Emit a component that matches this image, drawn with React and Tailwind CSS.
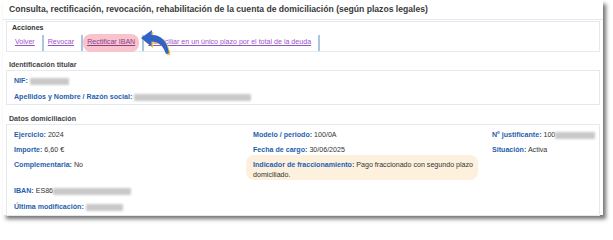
import React from "react";

const Blur = ({ w }) => (
    <span
        className="inline-block align-middle h-[7px] bg-[#c9c9c9] blur-[1.2px] rounded-[1px]"
        style={{ width: w }}
    />
);

const Field = ({ label, children }) => (
    <div className="leading-[10px] whitespace-nowrap">
        <span className="font-bold text-[#1f5fae]">{label}</span>{" "}
        <span className="text-[#333]">{children}</span>
    </div>
);

const Sep = () => <span className="w-[2px] h-[16px] bg-[#a9c6e3] mx-[3px]" />;

// curved "look here" arrow, drawn over the links row
const Arrow = () => (
    <svg className="absolute left-[130px] top-[5px]" width="38" height="30" viewBox="0 0 38 30">
        <path d="M4 11 L15 3 L14.5 8 C24 7.5 30 14 32 26 L29 27 C26 18 21 14.5 14.5 14.5 L14.5 19.5 Z" fill="#f0c23e" transform="translate(1.5 1.5)" />
        <path d="M4 11 L15 3 L14.5 8 C24 7.5 30 14 32 26 L29 27 C26 18 21 14.5 14.5 14.5 L14.5 19.5 Z" fill="#2f63c8" />
    </svg>
);

export default function App() {
    return (
        <div className="w-[613px] h-[227px] bg-white pl-[3px] font-['Liberation_Sans',Arial,sans-serif]">
            <div className="w-[600px] h-[215px] bg-white shadow-[3px_4px_4px_rgba(0,0,0,0.55)]">
                {/* Title */}
                <div className="h-[20px] border-b border-[#e6ebf0] pl-[6px] flex items-center text-[8.6px] font-bold text-[#3a3a3a]">
                    Consulta, rectificación, revocación, rehabilitación de la cuenta de domiciliación (según plazos legales)
                </div>

                <div className="px-[3px] text-[7.1px]">
                    {/* Acciones */}
                    <div className="relative mt-[1px] h-[31px] border border-[#e4e9ef] pl-[5px]">
                        <div className="font-bold text-[#333] leading-[10px] pt-[1px]">Acciones</div>
                        <div className="flex items-center h-[19px] text-[#9a52c7]">
                            <a className="underline ml-[3px] mr-[4px]">Volver</a>
                            <Sep />
                            <a className="underline ml-[1px] mr-[4px]">Revocar</a>
                            <Sep />
                            <span className="h-[18px] px-[4px] rounded-lg bg-[#f8c3ca] flex items-center -ml-[3px]">
                                <a className="underline text-[#8b3f8f]">Rectificar IBAN</a>
                            </span>
                            <Sep />
                            <a className="underline ml-[1px] mr-[4px]">Domiciliar en un único plazo por el total de la deuda</a>
                            <Sep />
                        </div>
                        <Arrow />
                    </div>

                    {/* Identificación titular */}
                    <div className="mt-[8px] pl-[3px] font-bold text-[#444] leading-[10px]">Identificación titular</div>
                    <div className="h-[35px] border border-[#e4e9ef] px-[7px] pt-[5px] flex flex-col gap-[6px]">
                        <Field label="NIF:"><Blur w={39} /></Field>
                        <Field label="Apellidos y Nombre / Razón social:"><Blur w={117} /></Field>
                    </div>

                    {/* Datos domiciliación */}
                    <div className="mt-[9px] pl-[3px] font-bold text-[#444] leading-[10px]">Datos domiciliación</div>
                    <div className="h-[92px] border border-[#e4e9ef] px-[7px] pt-[5px]">
                        <div className="grid grid-cols-[239px_239px_1fr] gap-y-[5px]">
                            <Field label="Ejercicio:">2024</Field>
                            <Field label="Modelo / periodo:">100/0A</Field>
                            <Field label="Nº justificante:">100<Blur w={40} /></Field>

                            <Field label="Importe:">6,60 €</Field>
                            <Field label="Fecha de cargo:">30/06/2025</Field>
                            <Field label="Situación:">Activa</Field>

                            <Field label="Complementaria:">No</Field>
                            <div className="-ml-[7px] -mt-[5px] w-[232px] h-[25px] rounded-lg bg-[#fdf1de] pl-[7px] pr-[1px] pt-[5px] leading-[10px] text-[#333]">
                                <span className="font-bold text-[#1f5fae]">Indicador de fraccionamiento:</span> Pago fraccionado con segundo plazo domiciliado.
                            </div>
                            <div />
                        </div>
                        <div className="mt-[6px] flex flex-col gap-[6px]">
                            <Field label="IBAN:">ES86<Blur w={78} /></Field>
                            <Field label="Última modificación:"><Blur w={37} /></Field>
                        </div>
                    </div>
                </div>
            </div>
        </div>
    );
}
